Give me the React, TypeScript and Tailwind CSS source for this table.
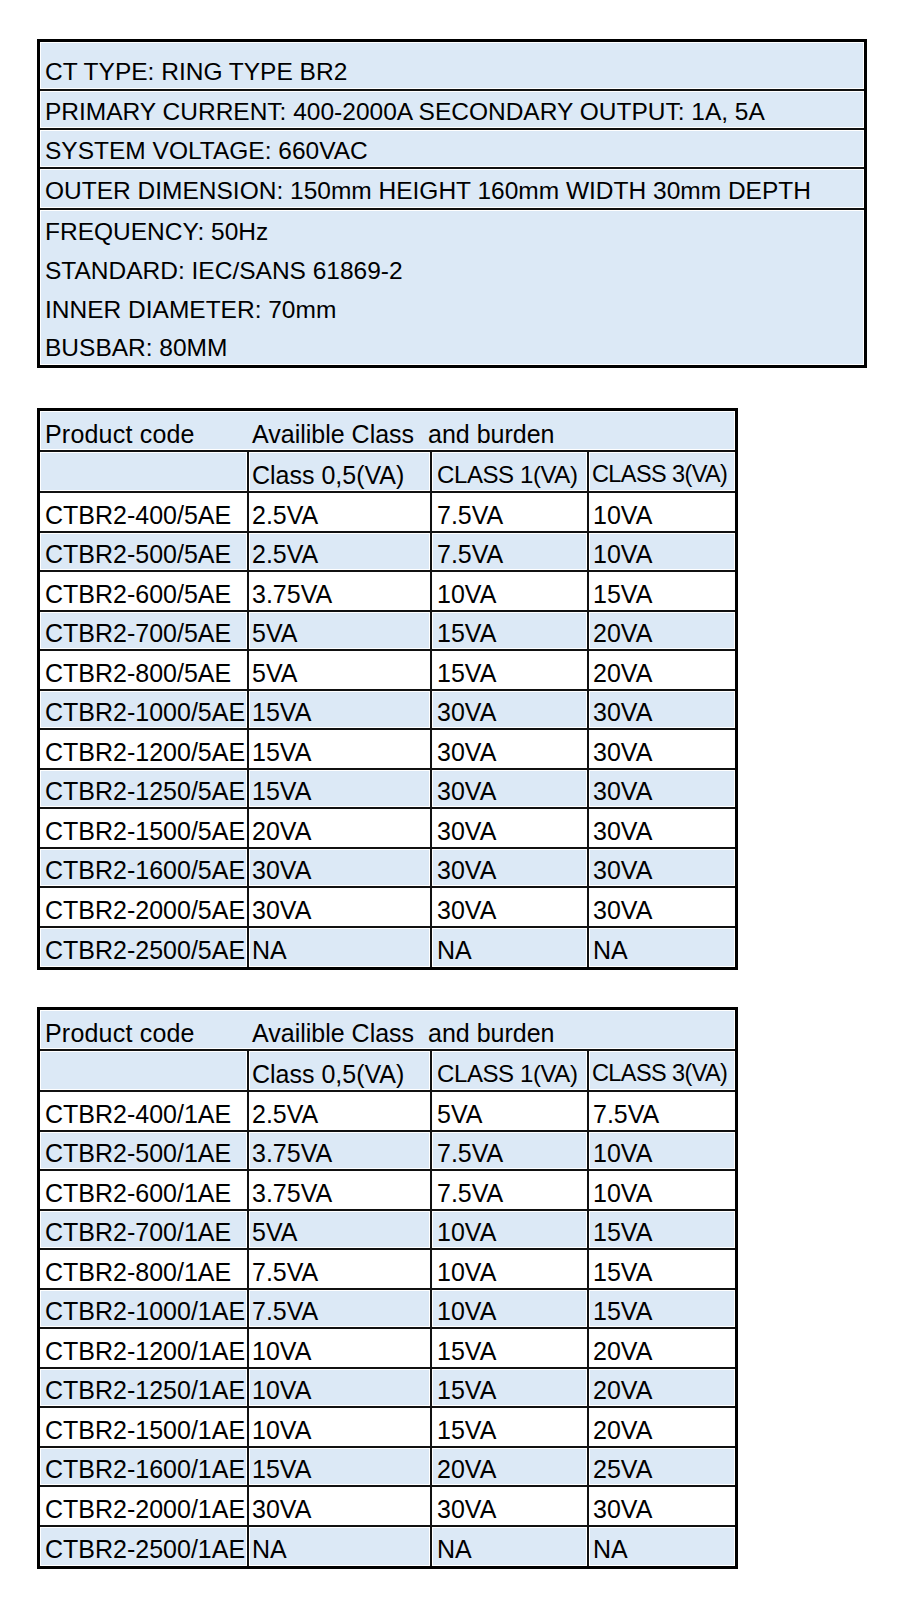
const specRows = [
  { text: "CT TYPE: RING TYPE BR2", h: "h-[49px] pt-[14px]" },
  { text: "PRIMARY CURRENT: 400-2000A SECONDARY OUTPUT: 1A, 5A", h: "h-[39px] pt-[5px]" },
  { text: "SYSTEM VOLTAGE: 660VAC", h: "h-[39px] pt-[6px]" },
  { text: "OUTER DIMENSION: 150mm HEIGHT 160mm WIDTH 30mm DEPTH", h: "h-[41px] pt-[6px]" },
];

const specLines = [
  "FREQUENCY: 50Hz",
  "STANDARD: IEC/SANS 61869-2",
  "INNER DIAMETER: 70mm",
  "BUSBAR: 80MM",
];

const rows5A: string[][] = [
  ["CTBR2-400/5AE", "2.5VA", "7.5VA", "10VA"],
  ["CTBR2-500/5AE", "2.5VA", "7.5VA", "10VA"],
  ["CTBR2-600/5AE", "3.75VA", "10VA", "15VA"],
  ["CTBR2-700/5AE", "5VA", "15VA", "20VA"],
  ["CTBR2-800/5AE", "5VA", "15VA", "20VA"],
  ["CTBR2-1000/5AE", "15VA", "30VA", "30VA"],
  ["CTBR2-1200/5AE", "15VA", "30VA", "30VA"],
  ["CTBR2-1250/5AE", "15VA", "30VA", "30VA"],
  ["CTBR2-1500/5AE", "20VA", "30VA", "30VA"],
  ["CTBR2-1600/5AE", "30VA", "30VA", "30VA"],
  ["CTBR2-2000/5AE", "30VA", "30VA", "30VA"],
  ["CTBR2-2500/5AE", "NA", "NA", "NA"],
];

const rows1A: string[][] = [
  ["CTBR2-400/1AE", "2.5VA", "5VA", "7.5VA"],
  ["CTBR2-500/1AE", "3.75VA", "7.5VA", "10VA"],
  ["CTBR2-600/1AE", "3.75VA", "7.5VA", "10VA"],
  ["CTBR2-700/1AE", "5VA", "10VA", "15VA"],
  ["CTBR2-800/1AE", "7.5VA", "10VA", "15VA"],
  ["CTBR2-1000/1AE", "7.5VA", "10VA", "15VA"],
  ["CTBR2-1200/1AE", "10VA", "15VA", "20VA"],
  ["CTBR2-1250/1AE", "10VA", "15VA", "20VA"],
  ["CTBR2-1500/1AE", "10VA", "15VA", "20VA"],
  ["CTBR2-1600/1AE", "15VA", "20VA", "25VA"],
  ["CTBR2-2000/1AE", "30VA", "30VA", "30VA"],
  ["CTBR2-2500/1AE", "NA", "NA", "NA"],
];

const blue = "bg-[#dce9f6] shadow-[inset_0_0_0_1px_#ffffff]";
const cols = "grid grid-cols-[209px_183px_157px_146px]";
const pads = ["pl-[5px]", "pl-[3px]", "pl-[5px]", "pl-[4px]"];

function SpecBox() {
  return (
    <div className="ml-[37px] w-[830px] border-[3px] border-black bg-[#dce9f6] text-[24.5px]">
      {specRows.map((r) => (
        <div
          key={r.text}
          className={`${r.h} ${blue} flex items-center border-b-2 border-[#111] pl-[5px] whitespace-nowrap`}
        >
          {r.text}
        </div>
      ))}
      <div className={`h-[155px] ${blue} flex flex-col`}>
        {specLines.map((l) => (
          <div key={l} className="h-[38.75px] flex items-center pt-[6px] pl-[5px] whitespace-nowrap">
            {l}
          </div>
        ))}
      </div>
    </div>
  );
}

function BurdenTable({ rows }: { rows: string[][] }) {
  return (
    <div className="ml-[37px] w-[701px] border-[3px] border-black text-[25px]">
      <div className={`grid grid-cols-[209px_486px] h-[41px] border-b-2 border-[#111] ${blue}`}>
        <div className="flex items-center pt-[7px] pl-[5px] tracking-[0.2px]">Product code</div>
        <div className="flex items-center pt-[7px] pl-[3px] whitespace-pre">Availible Class  and burden</div>
      </div>
      <div className={`${cols} h-[41px] border-b-2 border-[#111]`}>
        <div className={`border-r-2 border-[#111] ${blue}`} />
        <div className={`${blue} pl-[3px] border-r-2 border-[#111] flex items-center pt-[7px] whitespace-nowrap`}>
          Class 0,5(VA)
        </div>
        <div className={`${blue} pl-[5px] border-r-2 border-[#111] flex items-center pt-[7px] whitespace-nowrap text-[24px] tracking-[-0.4px]`}>
          CLASS 1(VA)
        </div>
        <div className={`${blue} pl-[3px] flex items-center pt-[7px] whitespace-nowrap text-[23.5px] tracking-[-0.6px]`}>
          CLASS 3(VA)
        </div>
      </div>
      {rows.map((row, ri) => (
        <div
          key={row[0]}
          className={`${cols} h-[39.5px] ${ri < rows.length - 1 ? "border-b-2 border-[#111]" : ""}`}
        >
          {row.map((c, ci) => (
            <div
              key={ci}
              className={`${ri % 2 === 1 ? blue : "bg-white"} ${pads[ci]} ${ci < 3 ? "border-r-2 border-[#111]" : ""} flex items-center pt-[7px] whitespace-nowrap overflow-hidden`}
            >
              {c}
            </div>
          ))}
        </div>
      ))}
    </div>
  );
}

export default function App() {
  return (
    <div className="min-h-[1611px] w-[900px] bg-white pt-[39px] leading-none text-black font-['Liberation_Sans',Arial,sans-serif]">
      <SpecBox />
      <div className="mt-[40px]">
        <BurdenTable rows={rows5A} />
      </div>
      <div className="mt-[37px]">
        <BurdenTable rows={rows1A} />
      </div>
    </div>
  );
}
